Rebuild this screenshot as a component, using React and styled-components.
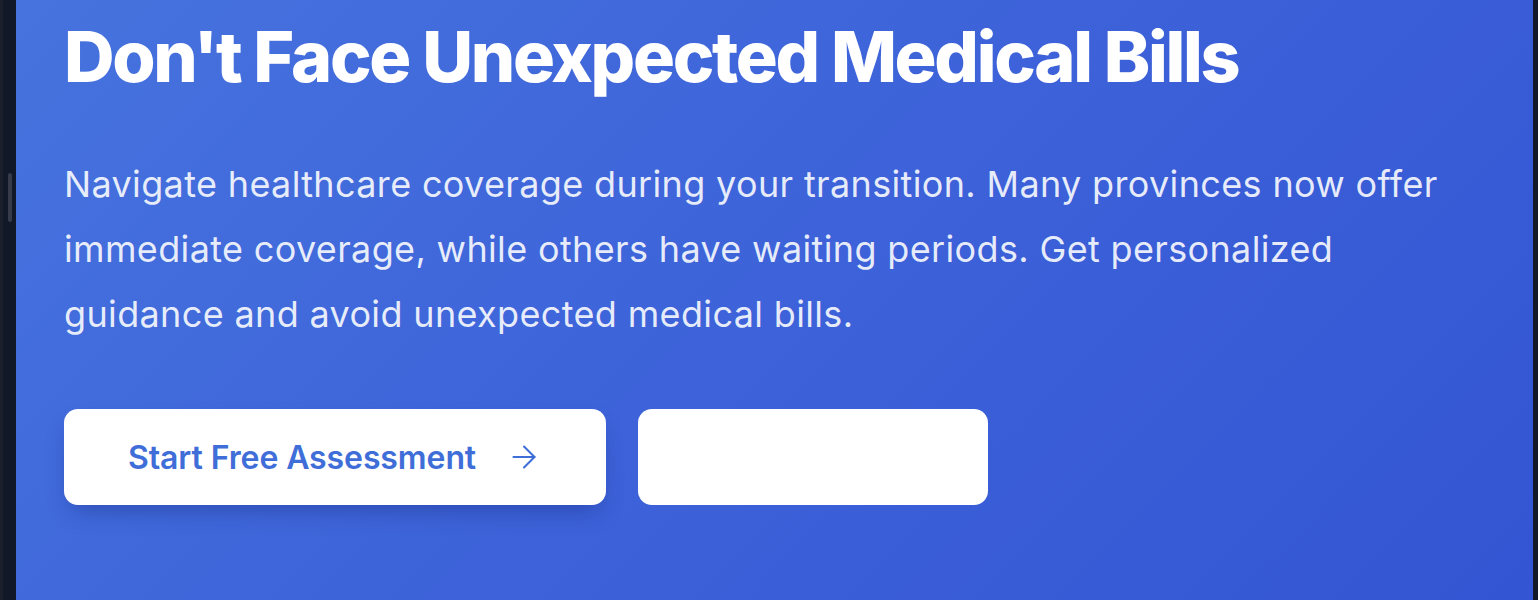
import React from 'react';
import styled, { createGlobalStyle } from 'styled-components';
import { ArrowRight } from 'lucide-react';

const GlobalStyle = createGlobalStyle`
  html, body {
    margin: 0;
    padding: 0;
    height: 600px;
    overflow: hidden;
    background: #111827;
  }
  * {
    box-sizing: border-box;
  }
`;

const Frame = styled.div`
  display: flex;
  width: 1538px;
  height: 600px;
  font-family: Inter, 'Noto Sans', sans-serif;
`;

const Rail = styled.div`
  width: 16px;
  flex-shrink: 0;
  background: #111827;
  border-left: 3px solid #1a1f2b;
  padding-top: 173px;
  padding-left: 5px;
`;

const Thumb = styled.div`
  width: 4px;
  height: 49px;
  border-radius: 2px;
  background: #363b49;
`;

const Hero = styled.section`
  flex: 1;
  background: linear-gradient(135deg, #4673de 0%, #3d62d9 50%, #3355d3 100%);
  padding: 17px 48px 0 48px;
  color: #ffffff;
`;

const EdgeStrip = styled.div`
  width: 5px;
  flex-shrink: 0;
  background: #111827;
`;

const Title = styled.h1`
  margin: 0;
  font-size: 70px;
  line-height: 79px;
  font-weight: 800;
  letter-spacing: -2.3px;
`;

const Lead = styled.p`
  margin: 56px 0 0;
  max-width: 1420px;
  font-size: 36px;
  line-height: 65px;
  font-weight: 400;
  letter-spacing: 0.35px;
  color: rgba(255, 255, 255, 0.88);
`;

const Actions = styled.div`
  display: flex;
  gap: 32px;
  margin-top: 62px;
`;

const Button = styled.button`
  display: flex;
  align-items: center;
  gap: 30px;
  width: ${(props) => props.$width}px;
  height: 96px;
  padding: 0 64px;
  border: none;
  border-radius: 14px;
  background: #ffffff;
  color: #3f6ed8;
  font-family: inherit;
  font-size: 32px;
  font-weight: 600;
  letter-spacing: -0.1px;
  white-space: nowrap;
  box-shadow: ${(props) =>
    props.$raised ? '0 12px 24px -8px rgba(20, 40, 120, 0.45)' : 'none'};
  cursor: pointer;

  svg {
    flex-shrink: 0;
  }
`;

const App = () => {
  return (
    <>
      <GlobalStyle />
      <Frame>
        <Rail>
          <Thumb />
        </Rail>
        <Hero>
          <Title>Don't Face Unexpected Medical Bills</Title>
          <Lead>
            Navigate healthcare coverage during your transition. Many provinces now offer
            immediate coverage, while others have waiting periods. Get personalized
            guidance and avoid unexpected medical bills.
          </Lead>
          <Actions>
            <Button $width={542} $raised>
              Start Free Assessment
              <ArrowRight size={36} strokeWidth={1.4} />
            </Button>
            <Button $width={350} />
          </Actions>
        </Hero>
        <EdgeStrip />
      </Frame>
    </>
  );
};

export default App;
